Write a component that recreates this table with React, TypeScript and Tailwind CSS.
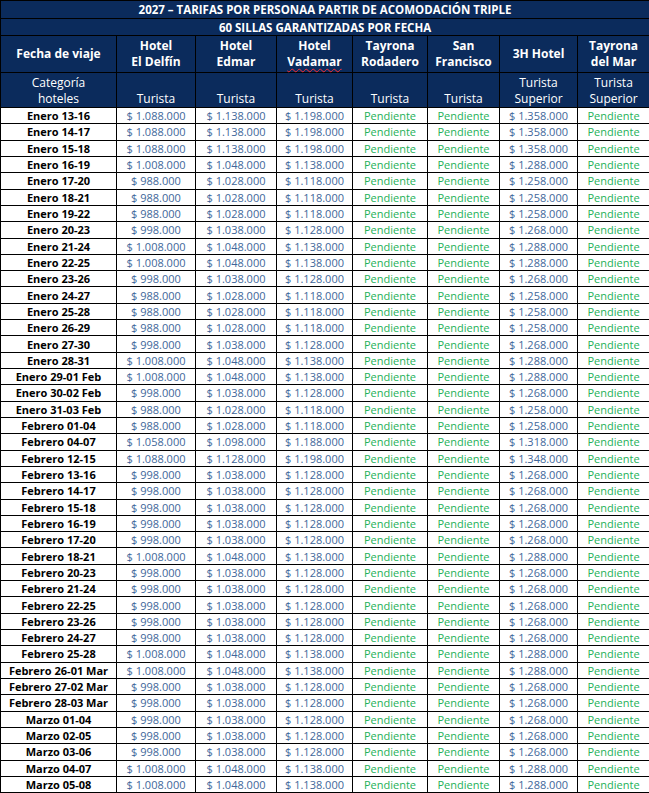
import React from "react";

type Row = [string, string, string, string, string];

const rows: Row[] = [
  ["Enero 13-16", "1.088.000", "1.138.000", "1.198.000", "1.358.000"],
  ["Enero 14-17", "1.088.000", "1.138.000", "1.198.000", "1.358.000"],
  ["Enero 15-18", "1.088.000", "1.138.000", "1.198.000", "1.358.000"],
  ["Enero 16-19", "1.008.000", "1.048.000", "1.138.000", "1.288.000"],
  ["Enero 17-20", "988.000", "1.028.000", "1.118.000", "1.258.000"],
  ["Enero 18-21", "988.000", "1.028.000", "1.118.000", "1.258.000"],
  ["Enero 19-22", "988.000", "1.028.000", "1.118.000", "1.258.000"],
  ["Enero 20-23", "998.000", "1.038.000", "1.128.000", "1.268.000"],
  ["Enero 21-24", "1.008.000", "1.048.000", "1.138.000", "1.288.000"],
  ["Enero 22-25", "1.008.000", "1.048.000", "1.138.000", "1.288.000"],
  ["Enero 23-26", "998.000", "1.038.000", "1.128.000", "1.268.000"],
  ["Enero 24-27", "988.000", "1.028.000", "1.118.000", "1.258.000"],
  ["Enero 25-28", "988.000", "1.028.000", "1.118.000", "1.258.000"],
  ["Enero 26-29", "988.000", "1.028.000", "1.118.000", "1.258.000"],
  ["Enero 27-30", "998.000", "1.038.000", "1.128.000", "1.268.000"],
  ["Enero 28-31", "1.008.000", "1.048.000", "1.138.000", "1.288.000"],
  ["Enero 29-01 Feb", "1.008.000", "1.048.000", "1.138.000", "1.288.000"],
  ["Enero 30-02 Feb", "998.000", "1.038.000", "1.128.000", "1.268.000"],
  ["Enero 31-03 Feb", "988.000", "1.028.000", "1.118.000", "1.258.000"],
  ["Febrero 01-04", "988.000", "1.028.000", "1.118.000", "1.258.000"],
  ["Febrero 04-07", "1.058.000", "1.098.000", "1.188.000", "1.318.000"],
  ["Febrero 12-15", "1.088.000", "1.128.000", "1.198.000", "1.348.000"],
  ["Febrero 13-16", "998.000", "1.038.000", "1.128.000", "1.268.000"],
  ["Febrero 14-17", "998.000", "1.038.000", "1.128.000", "1.268.000"],
  ["Febrero 15-18", "998.000", "1.038.000", "1.128.000", "1.268.000"],
  ["Febrero 16-19", "998.000", "1.038.000", "1.128.000", "1.268.000"],
  ["Febrero 17-20", "998.000", "1.038.000", "1.128.000", "1.268.000"],
  ["Febrero 18-21", "1.008.000", "1.048.000", "1.138.000", "1.288.000"],
  ["Febrero 20-23", "998.000", "1.038.000", "1.128.000", "1.268.000"],
  ["Febrero 21-24", "998.000", "1.038.000", "1.128.000", "1.268.000"],
  ["Febrero 22-25", "998.000", "1.038.000", "1.128.000", "1.268.000"],
  ["Febrero 23-26", "998.000", "1.038.000", "1.128.000", "1.268.000"],
  ["Febrero 24-27", "998.000", "1.038.000", "1.128.000", "1.268.000"],
  ["Febrero 25-28", "1.008.000", "1.048.000", "1.138.000", "1.288.000"],
  ["Febrero 26-01 Mar", "1.008.000", "1.048.000", "1.138.000", "1.288.000"],
  ["Febrero 27-02 Mar", "998.000", "1.038.000", "1.128.000", "1.268.000"],
  ["Febrero 28-03 Mar", "998.000", "1.038.000", "1.128.000", "1.268.000"],
  ["Marzo 01-04", "998.000", "1.038.000", "1.128.000", "1.268.000"],
  ["Marzo 02-05", "998.000", "1.038.000", "1.128.000", "1.268.000"],
  ["Marzo 03-06", "998.000", "1.038.000", "1.128.000", "1.268.000"],
  ["Marzo 04-07", "1.008.000", "1.048.000", "1.138.000", "1.288.000"],
  ["Marzo 05-08", "1.008.000", "1.048.000", "1.138.000", "1.288.000"],
];

const head = "border border-black bg-[#0b2b5c] text-white px-0.5";
const cell = "border border-black px-0.5 text-center whitespace-nowrap";
const price = `${cell} text-[#41679a]`;
const pending = `${cell} text-[#24b158]`;

export default function App() {
  return (
    <div className="w-[649px] h-[793px] overflow-hidden bg-white font-['Open_Sans',sans-serif]">
      <table className="w-[649px] table-fixed border-collapse text-[11px] leading-[13px]">
        <colgroup>
          <col className="w-[116px]" />
          <col className="w-[79px]" />
          <col className="w-[81px]" />
          <col className="w-[76px]" />
          <col className="w-[75px]" />
          <col className="w-[72px]" />
          <col className="w-[78px]" />
          <col className="w-[72px]" />
        </colgroup>
        <thead>
          <tr className="h-[18px]">
            <th colSpan={8} className={`${head} text-[11.5px] font-bold text-center`}>
              2027 – TARIFAS POR PERSONAA PARTIR DE ACOMODACIÓN TRIPLE
            </th>
          </tr>
          <tr className="h-[17px]">
            <th colSpan={8} className={`${head} text-[11.5px] font-bold text-center`}>
              60 SILLAS GARANTIZADAS POR FECHA
            </th>
          </tr>
          <tr className="h-[37px] font-bold text-[12px] leading-[16px]">
            <th className={head}>Fecha de viaje</th>
            <th className={head}>
              Hotel
              <br />
              El Delfín
            </th>
            <th className={head}>
              Hotel
              <br />
              Edmar
            </th>
            <th className={head}>
              Hotel
              <br />
              <span className="underline decoration-wavy decoration-red-500 decoration-1 underline-offset-2">
                Vadamar
              </span>
            </th>
            <th className={head}>
              Tayrona
              <br />
              Rodadero
            </th>
            <th className={head}>
              San
              <br />
              Francisco
            </th>
            <th className={head}>3H Hotel</th>
            <th className={head}>
              Tayrona
              <br />
              del Mar
            </th>
          </tr>
          <tr className="h-[35px] text-[12px] leading-[16px] font-normal align-bottom">
            <th className={`${head} font-normal`}>
              Categoría
              <br />
              hoteles
            </th>
            <th className={`${head} font-normal`}>Turista</th>
            <th className={`${head} font-normal`}>Turista</th>
            <th className={`${head} font-normal`}>Turista</th>
            <th className={`${head} font-normal`}>Turista</th>
            <th className={`${head} font-normal`}>Turista</th>
            <th className={`${head} font-normal`}>
              Turista
              <br />
              Superior
            </th>
            <th className={`${head} font-normal`}>
              Turista
              <br />
              Superior
            </th>
          </tr>
        </thead>
        <tbody>
          {rows.map(([fecha, delfin, edmar, vadamar, tres]) => (
            <tr key={fecha} className="h-[16.32px]">
              <td className={`${cell} font-bold text-black`}>{fecha}</td>
              <td className={price}>$ {delfin}</td>
              <td className={price}>$ {edmar}</td>
              <td className={price}>$ {vadamar}</td>
              <td className={pending}>Pendiente</td>
              <td className={pending}>Pendiente</td>
              <td className={price}>$ {tres}</td>
              <td className={pending}>Pendiente</td>
            </tr>
          ))}
        </tbody>
      </table>
    </div>
  );
}
